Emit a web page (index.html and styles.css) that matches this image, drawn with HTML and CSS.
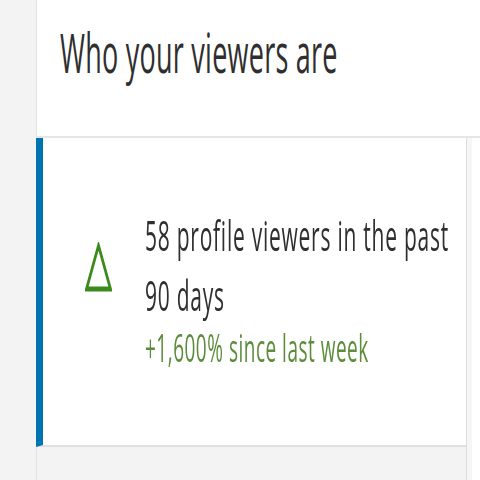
FILE: index.html
```html
<!DOCTYPE html>
<html lang="en">
<head>
<meta charset="utf-8">
<title>Who your viewers are</title>
<link rel="stylesheet" href="styles.css">
</head>
<body>
<div class="viewport">
  <div class="page">
    <aside class="sidebar"></aside>
    <main class="main">
      <header class="header">
        <h1 class="title">Who your viewers are</h1>
      </header>
      <div class="body">
        <div class="column">
          <section class="card">
            <div class="stat">
              <svg class="trend-icon" viewBox="0 0 54 50" width="54" height="50" aria-hidden="true">
                <polygon points="27,3.5 51,47 3,47" fill="none" stroke="#3a8a1c" stroke-width="5" stroke-linejoin="miter"/>
              </svg>
              <p class="stat-text">58 profile viewers in the past<br>90 days</p>
            </div>
            <p class="stat-change">+1,600% since last week</p>
          </section>
          <div class="filler"></div>
        </div>
        <div class="spacer"></div>
      </div>
    </main>
  </div>
</div>
</body>
</html>
```

FILE: styles.css
```css
html, body {
  margin: 0;
  padding: 0;
  background: #ffffff;
  overflow: hidden;
}

.viewport {
  width: 480px;
  height: 480px;
  overflow: hidden;
}

.page {
  width: 960px;
  height: 480px;
  display: flex;
  transform: scaleX(0.5);
  transform-origin: 0 0;
  font-family: "Open Sans", "Liberation Sans", sans-serif;
  color: #333333;
}

.sidebar {
  flex: 0 0 72px;
  background: #f3f3f3;
}

.main {
  flex: 1;
  display: flex;
  flex-direction: column;
}

.header {
  height: 111px;
  border-left: 2px solid #e2e2e2;
  border-bottom: 2px solid #e6e6e6;
  background: #ffffff;
  padding: 25px 0 0 46px;
}

.title {
  margin: 0;
  font-size: 54px;
  line-height: 54px;
  font-weight: 400;
  letter-spacing: 0.5px;
  color: #2f2f2f;
}

.body {
  flex: 1;
  display: flex;
}

.column {
  flex: 0 0 862px;
  display: flex;
  flex-direction: column;
}

.card {
  height: 309px;
  box-sizing: border-box;
  background: #ffffff;
  border-left: 14px solid #0073b1;
  border-right: 2px solid #dcdcdc;
  border-bottom: 2px solid #e0e0e0;
  padding: 67px 0 0 84px;
}

.stat {
  display: flex;
  align-items: center;
  gap: 66px;
}

.trend-icon {
  flex: 0 0 54px;
  display: block;
  margin-top: 4px;
}

.stat-text {
  margin: 0;
  font-size: 42px;
  line-height: 60px;
  letter-spacing: 1.5px;
  color: #2f2f2f;
}

.stat-change {
  margin: -2px 0 0 120px;
  font-size: 38px;
  line-height: 48px;
  letter-spacing: 1px;
  color: #5c8c3c;
}

.filler {
  flex: 1;
  background: #f3f3f3;
  border-left: 2px solid #e2e2e2;
  border-right: 2px solid #dcdcdc;
}

.spacer {
  flex: 1;
  background: #ffffff;
  border-left: 10px solid #f6f6f6;
}
```
